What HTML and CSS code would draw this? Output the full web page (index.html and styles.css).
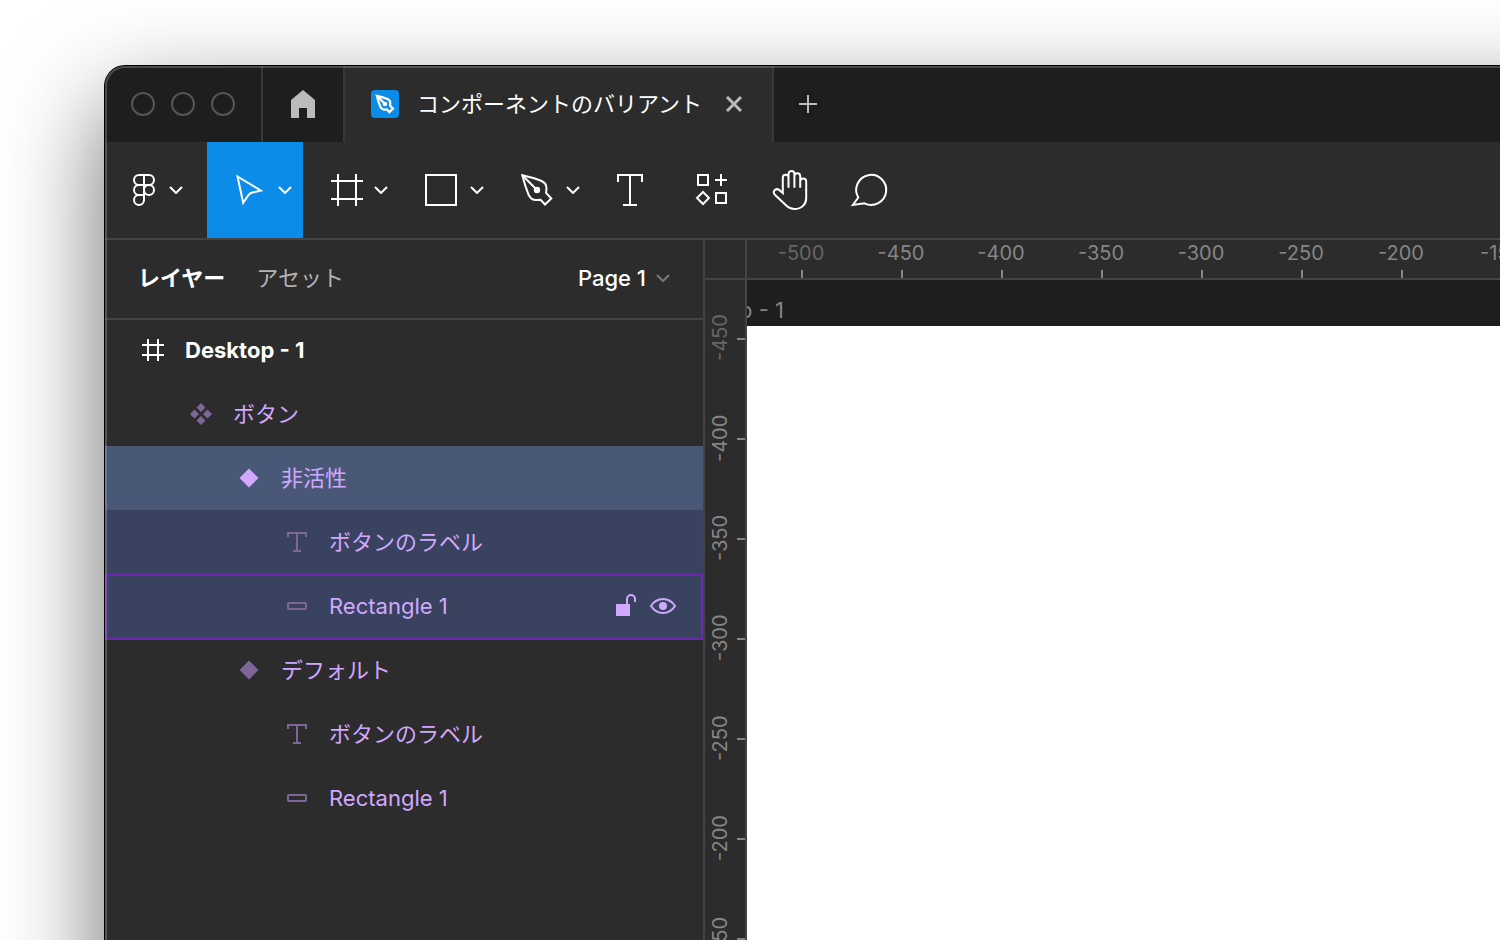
FILE: index.html
```html
<!DOCTYPE html>
<html lang="ja">
<head>
<meta charset="utf-8">
<title>コンポーネントのバリアント</title>
<link rel="stylesheet" href="styles.css">
</head>
<body>
<svg class="defs" width="0" height="0" aria-hidden="true">
  <symbol id="chevron" viewBox="0 0 14 8"><path d="M1 1l6 6 6-6"/></symbol>
  <symbol id="pen" viewBox="0 0 36 36">
    <path d="M3.300 3.300c7 1.600 13.200 3.200 19.200 5.700 3.300 1.600 5 4 5 7l-.4 4.800 5.200 5.700-6.300 6-4.400-4.800-4.600.4c-3 0-5.500-1.600-7.300-5.100C7 16.500 4.900 9.500 3.300 3.300z"/>
    <path d="M3.300 3.300L18 18"/><circle class="dot" cx="18" cy="18" r="2.200"/>
  </symbol>
  <symbol id="text" viewBox="0 0 24 24"><path d="M3 7V3h18v4M12 3v18M8 21h8"/></symbol>
  <symbol id="bar" viewBox="0 0 24 24"><rect x="3" y="9" width="18" height="6" rx="1"/></symbol>
</svg>
<div class="window">
  <header class="titlebar">
    <div class="lights"><span class="light"></span><span class="light"></span><span class="light"></span></div>
    <button class="home" aria-label="Home">
      <svg width="24" height="28" viewBox="0 0 24 28"><path d="M0 10L12 0l12 10v18h-8V18H8v10H0z"/></svg>
    </button>
    <div class="tab">
      <span class="tab-icon"><svg width="20" height="20"><use href="#pen"/></svg></span>
      <span class="tab-name">コンポーネントのバリアント</span>
      <button class="tab-close" aria-label="Close"><svg width="16" height="16" viewBox="0 0 16 16"><path d="M1 1l14 14M15 1L1 15"/></svg></button>
    </div>
    <button class="tab-new" aria-label="New tab"><svg width="18" height="18" viewBox="0 0 18 18"><path d="M9 0v18M0 9h18"/></svg></button>
  </header>

  <nav class="toolbar">
    <button class="tool tool-menu" aria-label="Menu">
      <svg width="29" height="36" viewBox="0 0 29 36"><rect x="5" y="3" width="20" height="10" rx="5"/><path d="M15 13h-5a5 5 0 0 0 0 10h5M15 23h-5a5 5 0 1 0 5 5V3"/><circle cx="20" cy="18" r="5"/></svg>
      <svg width="14" height="8"><use href="#chevron"/></svg>
    </button>
    <button class="tool tool-split tool-active" aria-label="Move">
      <svg width="36" height="36" viewBox="0 0 36 36"><path d="M6.500 4.500L29.800 18.500l-9.300 2.300c-1.300.4-2 .9-2.800 2l-5.500 8z"/></svg>
      <svg width="14" height="8"><use href="#chevron"/></svg>
    </button>
    <button class="tool tool-split" aria-label="Frame">
      <svg width="36" height="36" viewBox="0 0 36 36"><path d="M11 2v32M29 2v32M4 9h32M4 27h32"/></svg>
      <svg width="14" height="8"><use href="#chevron"/></svg>
    </button>
    <button class="tool tool-split" aria-label="Rectangle">
      <svg width="36" height="36" viewBox="0 0 36 36"><rect x="3" y="3" width="30" height="30"/></svg>
      <svg width="14" height="8"><use href="#chevron"/></svg>
    </button>
    <button class="tool tool-split" aria-label="Pen">
      <svg width="36" height="36"><use href="#pen"/></svg>
      <svg width="14" height="8"><use href="#chevron"/></svg>
    </button>
    <button class="tool tool-single" aria-label="Text">
      <svg width="40" height="40" viewBox="0 0 40 40"><path d="M7 12V5h24v7M19 5v30M12 35h14"/></svg>
    </button>
    <button class="tool tool-single" aria-label="Resources">
      <svg width="40" height="40" viewBox="0 0 40 40"><path d="M7 5h10v10H7zM25 23h10v10H25zM30 4v12M24 10h12M12 22l6 6-6 6-6-6z"/></svg>
    </button>
    <button class="tool tool-single" aria-label="Hand">
      <svg width="40" height="40" viewBox="0 0 40 40"><path d="M29.200 17.700V6.100a2.800 2.800 0 0 0-5.800 0M23.400 17.700V4a2.900 2.900 0 0 0-5.900 0M17.500 17.700V7.500a2.800 2.800 0 0 0-5.700 0V23L8.500 20.200c-1.500-1.300-3.500-1.300-4.900 0s-1 3.300.5 4.700L15.500 35.800c2.300 2.200 4.700 3.200 7.700 3.200 7.600 0 12-4.800 12-10.700V11.500a2.900 2.900 0 0 0-6 0M17.500 4v5M23.400 4v5"/></svg>
    </button>
    <button class="tool tool-single" aria-label="Comment">
      <svg width="40" height="40" viewBox="0 0 40 40"><path d="M1.800 35l5.500-7.500A15 15 0 1 1 13.500 33.300z"/></svg>
    </button>
  </nav>

  <div class="workspace">
    <aside class="panel">
      <div class="panel-head">
        <button class="panel-tab panel-tab-on">レイヤー</button>
        <button class="panel-tab">アセット</button>
        <button class="page-pick">Page 1 <svg width="14" height="8"><use href="#chevron"/></svg></button>
      </div>
      <ul class="layers">
        <li class="layer layer-frame"><svg width="24" height="24" viewBox="0 0 24 24"><path d="M7 1v22M17 1v22M1 7h22M1 17h22"/></svg><span>Desktop - 1</span></li>
        <li class="layer depth-1"><svg class="solid" width="24" height="24" viewBox="0 0 24 24"><path d="M12 1l4.500 4.500L12 10 7.500 5.500zM12 14l4.500 4.500L12 23l-4.500-4.500zM5.500 7.500L10 12l-4.500 4.500L1 12zM18.500 7.500L23 12l-4.500 4.500L14 12z"/></svg><span>ボタン</span></li>
        <li class="layer depth-2 selected"><svg class="solid" width="24" height="24" viewBox="0 0 24 24"><path d="M12 2.500l9.500 9.500-9.500 9.500L2.500 12z"/></svg><span>非活性</span></li>
        <li class="layer depth-3 within"><svg width="24" height="24"><use href="#text"/></svg><span>ボタンのラベル</span></li>
        <li class="layer depth-3 within hovered"><svg width="24" height="24"><use href="#bar"/></svg><span>Rectangle 1</span>
          <div class="actions">
            <button aria-label="Lock"><svg width="22" height="24" viewBox="0 0 22 24"><path class="block" d="M1 10h14v12H1z"/><path d="M12 11V5a4 4 0 0 1 8 0v3"/></svg></button>
            <button aria-label="Hide"><svg width="28" height="24" viewBox="0 0 28 24"><path d="M2 12c3-4.700 7-7 12-7s9 2.300 12 7c-3 4.700-7 7-12 7s-9-2.300-12-7z"/><circle class="block" cx="14" cy="12" r="4"/></svg></button>
          </div>
        </li>
        <li class="layer depth-2"><svg class="solid" width="24" height="24" viewBox="0 0 24 24"><path d="M12 2.500l9.500 9.500-9.500 9.500L2.500 12z"/></svg><span>デフォルト</span></li>
        <li class="layer depth-3"><svg width="24" height="24"><use href="#text"/></svg><span>ボタンのラベル</span></li>
        <li class="layer depth-3"><svg width="24" height="24"><use href="#bar"/></svg><span>Rectangle 1</span></li>
      </ul>
    </aside>
    <div class="corner"></div>
    <div class="ruler-x"><span class="faint">-500</span><span>-450</span><span>-400</span><span>-350</span><span>-300</span><span>-250</span><span>-200</span><span>-150</span></div>
    <div class="ruler-y"><span class="faint">-450</span><span>-400</span><span>-350</span><span>-300</span><span>-250</span><span>-200</span><span>-150</span></div>
    <main class="canvas">
      <div class="frame-label"><span>Desktop - 1</span></div>
      <div class="frame"></div>
    </main>
  </div>
</div>
</body>
</html>
```
FILE: styles.css
```css
* { box-sizing: border-box; }

body {
  margin: 0;
  height: 100vh;
  padding: 66px 0 0 105px;
  overflow: hidden;
  background: #fff;
  color: #fff;
  font: 22px/32px Inter, "Noto Sans CJK JP", sans-serif;
}

button {
  margin: 0;
  padding: 0;
  border: 0;
  background: none;
  color: inherit;
  font: inherit;
}

svg {
  display: block;
  flex: none;
  overflow: visible;
  fill: none;
  stroke: currentColor;
  stroke-width: 2;
}
.defs { position: absolute; }
.dot { fill: currentColor; }
.block { fill: currentColor; stroke: none; }

/* The window runs past the right and bottom edges of the viewport. */
.window {
  position: relative;
  display: flex;
  flex-direction: column;
  width: calc(100% + 160px);
  height: calc(100% + 160px);
  border-radius: 20px;
  background: #2c2c2c;
  box-shadow: 0 0 0 1px #000, 0 40px 100px rgba(0, 0, 0, .6);
}
.window::after {
  content: "";
  position: absolute;
  inset: 0;
  border-radius: inherit;
  box-shadow: inset 0 0 0 2px rgba(255, 255, 255, .2);
  pointer-events: none;
}

.titlebar {
  display: flex;
  flex: none;
  height: 76px;
  border-radius: 20px 0 0 0;
  background: #1e1e1e;
}
.lights {
  display: flex;
  align-items: center;
  gap: 16px;
  padding: 0 26px;
}
.light {
  width: 24px;
  height: 24px;
  border: 2px solid #565656;
  border-radius: 50%;
}
.home {
  display: grid;
  place-items: center;
  width: 84px;
  border: solid #383838;
  border-width: 0 2px;
  color: #bbb;
}
.home svg { fill: currentColor; stroke: none; }
.tab {
  display: flex;
  align-items: center;
  padding: 0 30px 0 26px;
  border-right: 2px solid #383838;
  background: #2c2c2c;
}
.tab-icon {
  display: grid;
  place-items: center;
  width: 28px;
  height: 28px;
  margin-right: 18px;
  border-radius: 4px;
  background: #0c8ce9;
}
.tab-icon svg { stroke-width: 4; }
.tab-name { margin-right: 24px; }
.tab-close, .tab-new { color: #bbb; }
.tab-close svg { stroke-width: 3; }
.tab-new { padding: 0 25px; }

.toolbar {
  display: flex;
  flex: none;
  height: 98px;
  border-bottom: 2px solid #444;
}
.tool {
  display: flex;
  align-items: center;
  gap: 11px;
}
.tool-menu { width: 102px; padding-left: 24px; }
.tool-split { width: 96px; padding-left: 24px; }
.tool-single { width: 80px; justify-content: center; }
.tool-active { background: #0c8ce9; }

.workspace {
  display: grid;
  flex: 1;
  grid-template: 40px 1fr / 600px 42px 1fr;
  min-height: 0;
}
.panel {
  grid-row: span 2;
  border-right: 2px solid #444;
}
.panel-head {
  display: flex;
  align-items: center;
  gap: 31px;
  height: 78px;
  padding: 0 33px 2px;
  box-shadow: 0 2px #444;
}
.panel-tab { color: #b3b3b3; }
.panel-tab-on { color: #fff; font-weight: 700; }
.page-pick {
  display: flex;
  align-items: center;
  gap: 10px;
  margin-left: auto;
  font-weight: 500;
}
.page-pick svg { color: #7a7a7a; }

.layers {
  margin: 0;
  padding: 0;
  list-style: none;
}
.layer {
  display: flex;
  align-items: center;
  gap: 20px;
  height: 64px;
  padding: 0 26px 0 36px;
  color: #d1a8ff;
}
.layer > svg { color: #7f6699; }
.layer > .solid { fill: currentColor; stroke: none; }
.layer-frame { color: #fff; font-weight: 700; }
.layer-frame > svg { color: #fff; }
.depth-1 { padding-left: 84px; }
.depth-2 { padding-left: 132px; }
.depth-3 { padding-left: 180px; }
.selected { background: #4a5878; }
.selected > svg { color: #d1a8ff; }
.within { background: #394360; }
.hovered {
  box-shadow: inset 2px 2px #6b26b3, inset -2px 0 #6b26b3, 0 2px #6b26b3;
}
.actions {
  display: flex;
  gap: 12px;
  margin-left: auto;
}

.corner {
  border: solid #444;
  border-width: 0 2px 2px 0;
}
.ruler-x, .ruler-y {
  display: flex;
  overflow: hidden;
  color: #858585;
  font-size: 20px;
  line-height: 26px;
}
.ruler-x {
  padding-left: 5px;
  border-bottom: 2px solid #444;
}
.ruler-y {
  flex-direction: column;
  padding-top: 9px;
  border-right: 2px solid #444;
}
.ruler-x span {
  flex: none;
  width: 100px;
  padding-right: 2px;
  text-align: center;
  background: linear-gradient(#858585, #858585) center bottom / 2px 8px no-repeat;
}
/* Turned half round, so the right and bottom padding show at the left and top. */
.ruler-y span {
  flex: none;
  width: 40px;
  height: 100px;
  padding: 2px 2px 0 0;
  writing-mode: vertical-rl;
  text-align: center;
  transform: rotate(180deg);
  background: linear-gradient(#858585, #858585) left center / 8px 2px no-repeat;
}
.ruler-x .faint, .ruler-y .faint { color: #666; }

.canvas {
  display: flex;
  flex-direction: column;
  background: #1e1e1e;
}
.frame-label {
  display: flex;
  justify-content: flex-end;
  width: 37px;
  height: 46px;
  padding-top: 14px;
  overflow: hidden;
  color: #858585;
  white-space: nowrap;
}
.frame { flex: 1; background: #fff; }
```
